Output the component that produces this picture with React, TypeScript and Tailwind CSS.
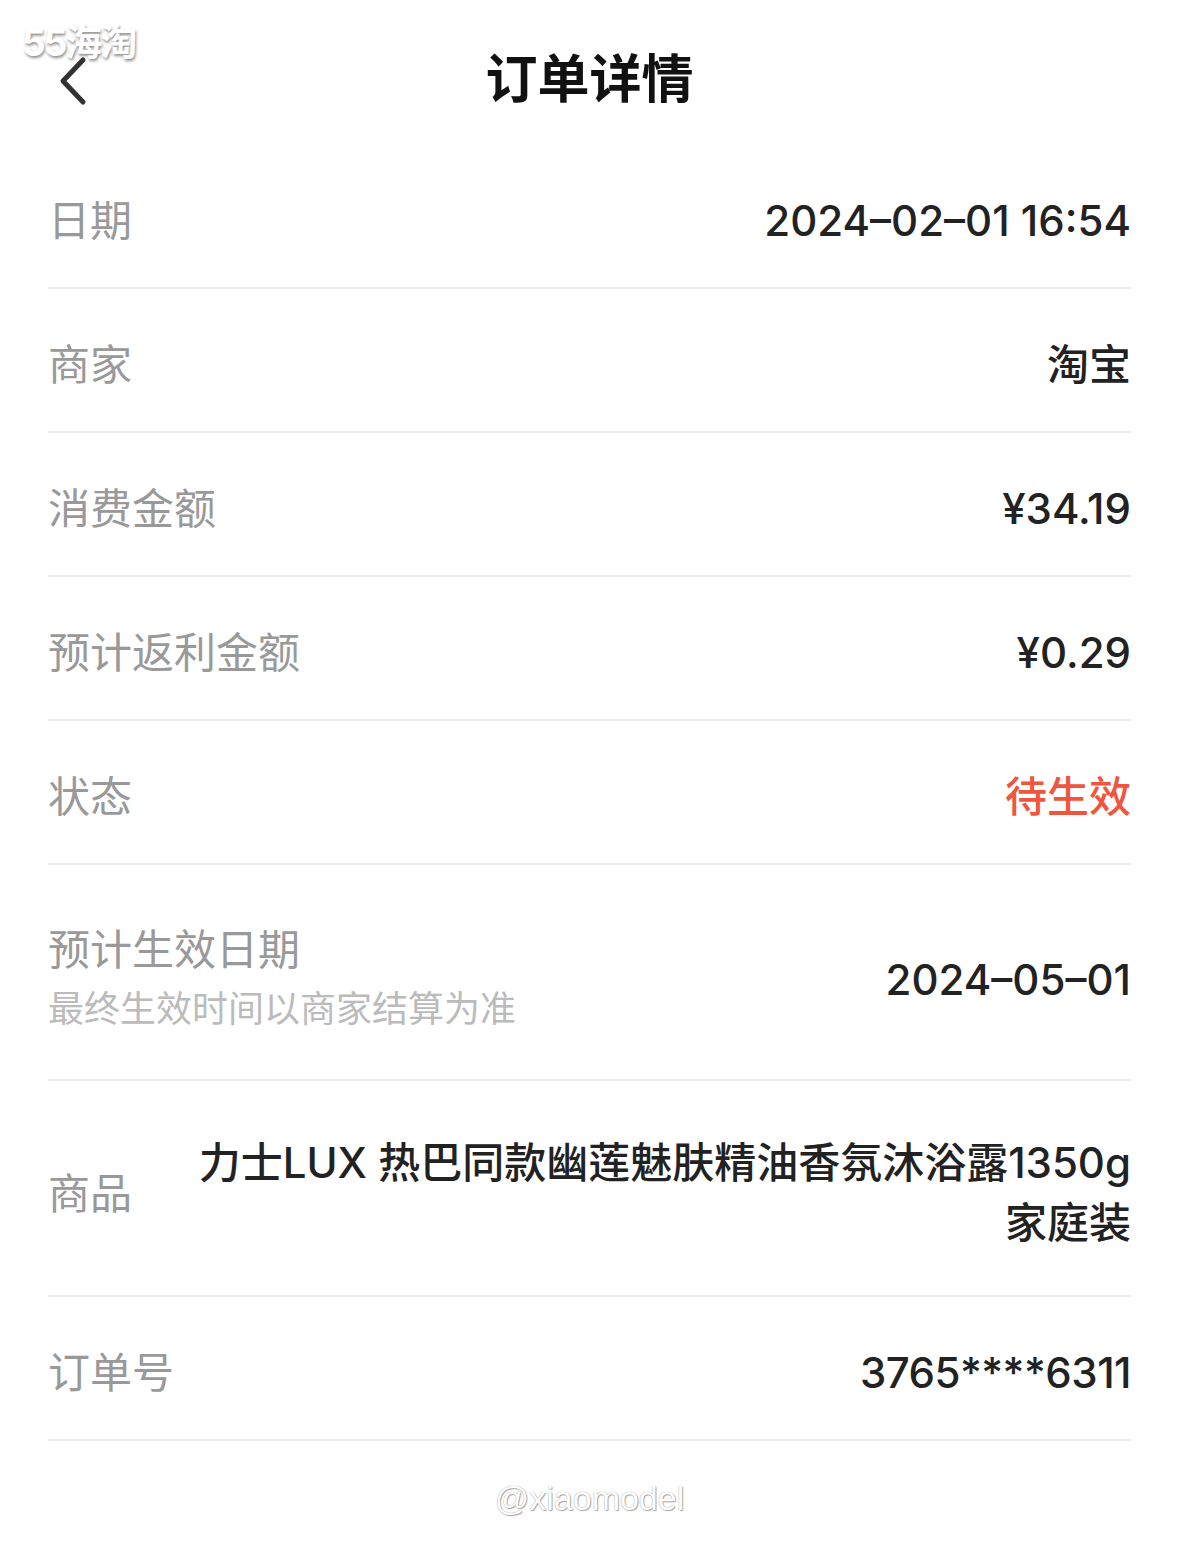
import React from 'react'

const rows = [
  { label: '日期', value: '2024–02–01 16:54' },
  { label: '商家', value: '淘宝' },
  { label: '消费金额', value: '¥34.19' },
  { label: '预计返利金额', value: '¥0.29' },
  { label: '状态', value: '待生效', red: true },
]

export default function App() {
  return (
    <div
      className="relative min-h-[1547px] w-[1179px] bg-white"
      style={{ fontFamily: 'Inter, "Noto Sans CJK SC", sans-serif' }}
    >
      {/* watermark top-left */}
      <div className="absolute left-[22px] top-[24px] text-[37px] font-bold leading-none tracking-[-2px] text-white [text-shadow:1px_2px_3px_rgba(0,0,0,0.45)]">
        55海淘
      </div>

      {/* Header */}
      <div className="relative flex h-[145px] items-center justify-center pt-[14px]">
        <svg className="absolute left-[56px] top-[56px]" width="34" height="50" viewBox="0 0 34 50">
          <path d="M27 4 L7 25 L27 46" fill="none" stroke="#333" strokeWidth="5" strokeLinecap="round" strokeLinejoin="round" />
        </svg>
        <h1 className="text-[52px] font-bold text-[#111]">订单详情</h1>
      </div>

      {/* Rows */}
      <div className="px-12">
        {rows.map((r) => (
          <div key={r.label} className="flex h-[144px] items-center justify-between border-b-2 border-[#ececec] pt-[8px]">
            <span className="text-[42px] text-[#999]">{r.label}</span>
            <span className={`text-[42px] font-medium ${r.red ? 'text-[#f0553d]' : 'text-[#222]'}`}>{r.value}</span>
          </div>
        ))}

        <div className="flex h-[216px] items-center justify-between border-b-2 border-[#ececec] pt-[14px]">
          <div className="flex flex-col">
            <span className="text-[42px] leading-[60px] text-[#999]">预计生效日期</span>
            <span className="text-[36px] leading-[58px] text-[#bbb]">最终生效时间以商家结算为准</span>
          </div>
          <span className="text-[42px] font-medium text-[#222]">2024–05–01</span>
        </div>

        <div className="flex h-[216px] items-center justify-between gap-[60px] border-b-2 border-[#ececec] pt-[10px]">
          <span className="shrink-0 text-[42px] text-[#999]">商品</span>
          <span className="text-right text-[42px] font-medium leading-[60px] text-[#222]">
            力士LUX 热巴同款幽莲魅肤精油香氛沐浴露1350g
            <br />
            家庭装
          </span>
        </div>

        <div className="flex h-[144px] items-center justify-between border-b-2 border-[#ececec] pt-[8px]">
          <span className="text-[42px] text-[#999]">订单号</span>
          <span className="text-[42px] font-medium tracking-[-0.5px] text-[#222]">3765****6311</span>
        </div>
      </div>

      {/* watermark bottom */}
      <div className="flex justify-center pt-[32px]">
        <span className="text-[34px] text-white [text-shadow:0_0_1px_#888,1px_1px_1px_#aaa]" style={{ fontFamily: '"Liberation Sans", sans-serif' }}>
          @xiaomodel
        </span>
      </div>
    </div>
  )
}
